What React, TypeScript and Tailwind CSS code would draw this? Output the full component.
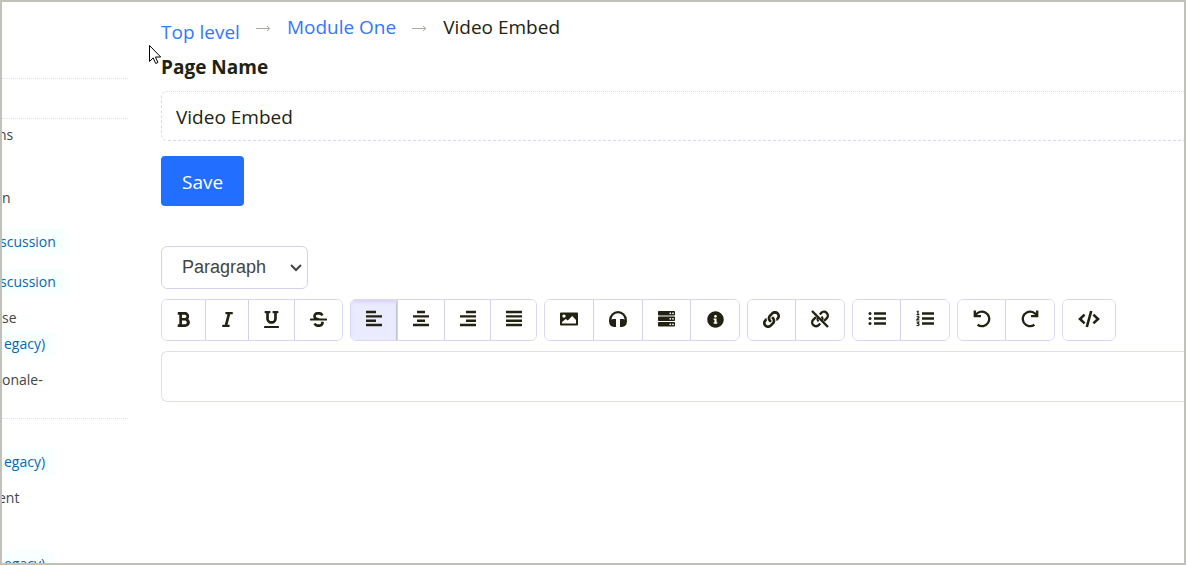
import { ReactNode, useState } from "react";
import { FaBold, FaInfoCircle, FaItalic, FaLink, FaStrikethrough, FaUnderline } from "react-icons/fa";

interface Tool {
  name: string;
  width: string;
  icon: ReactNode;
}

interface SideItem {
  text: string;
  link?: boolean;
  space: string;
}

const Lines = ({ d }: { d: string }) => (
  <svg width="18" height="18" viewBox="0 0 18 18" fill="none" stroke="currentColor" strokeWidth="2.4">
    <path d={d} />
  </svg>
);

const ImageIcon = () => (
  <svg width="18" height="18" viewBox="0 0 18 18" fill="currentColor" fillRule="evenodd">
    <path d="M1 2.5h16a1 1 0 0 1 1 1v11a1 1 0 0 1-1 1H1a1 1 0 0 1-1-1v-11a1 1 0 0 1 1-1ZM4 4.4a1.7 1.7 0 1 0 0 3.4 1.7 1.7 0 0 0 0-3.4ZM2 13.5h14V10l-3.8-4-4.4 4.4L5.8 9 2 12Z" />
  </svg>
);

const HeadphonesIcon = () => (
  <svg width="18" height="18" viewBox="0 0 18 18">
    <path d="M1.2 12v-2a7.8 7.8 0 0 1 15.6 0v2" fill="none" stroke="currentColor" strokeWidth="2.2" />
    <path
      d="M7 9v8H5.2C2 17 .2 14.8.2 12.6S2 9 4.6 9ZM11 9v8h1.8c3.2 0 5-2.2 5-4.4S16 9 13.4 9Z"
      fill="currentColor"
    />
  </svg>
);

const ServerIcon = () => (
  <svg width="18" height="18" viewBox="0 0 18 18">
    {[1, 6.5, 12].map((y) => (
      <g key={y}>
        <rect x="0" y={y} width="17" height="4.6" rx="0.8" fill="currentColor" />
        <circle cx="12.3" cy={y + 2.3} r="0.9" fill="white" />
        <circle cx="15" cy={y + 2.3} r="0.9" fill="white" />
      </g>
    ))}
  </svg>
);

const UnlinkIcon = () => (
  <svg width="18" height="18" viewBox="0 0 18 18" fill="none" stroke="currentColor" strokeWidth="2.4">
    <path d="M1 1l16 16" />
    <path d="M8.8 4.5l1.4-1.5a3.8 3.8 0 0 1 5.6 5.2L13 11M9.2 13.5l-1.4 1.5a3.8 3.8 0 0 1-5.6-5.2L5 7" />
    <path d="M10.5 6.5a3.5 3.5 0 0 1 1 3.5M7.5 11.5a3.5 3.5 0 0 1-1-3.5" strokeWidth="2" />
  </svg>
);

const ListIcon = ({ ordered = false }: { ordered?: boolean }) => (
  <svg width="18" height="18" viewBox="0 0 18 18" fill="none" stroke="currentColor">
    <path d="M6 3.5h12M6 8.5h12M6 13.5h12" strokeWidth="2.4" />
    {ordered ? (
      <path
        d="M.8 1.9l1.2-.6v3.4M.6 4.7h2.8M.6 7q2.4-1 2.4.4L.8 9.8h2.6M.6 12.1h2.2L1.8 13.5q1.6 0 1.2 1.4-.8 1-2.4.4"
        strokeWidth="1.2"
      />
    ) : (
      <g fill="currentColor" stroke="none">
        <circle cx="2" cy="3.5" r="1.5" />
        <circle cx="2" cy="8.5" r="1.5" />
        <circle cx="2" cy="13.5" r="1.5" />
      </g>
    )}
  </svg>
);

const UndoIcon = ({ flip = false }: { flip?: boolean }) => (
  <svg
    width="18"
    height="18"
    viewBox="0 0 18 18"
    fill="none"
    stroke="currentColor"
    strokeWidth="2.3"
    className={flip ? "-scale-x-100" : ""}
  >
    <path d="M1.8 .5V6.2H8" />
    <path d="M2.2 6A7.3 7.3 0 1 1 4.6 14.8" />
  </svg>
);

const CodeIcon = () => (
  <svg width="22" height="18" viewBox="0 0 22 18" fill="none" stroke="currentColor" strokeWidth="2.6">
    <path d="M6.6 4.6 2 9l4.6 4.4M15.4 4.6 20 9l-4.6 4.4M13.2 1 8.8 17" />
  </svg>
);

const toolGroups: Tool[][] = [
  [
    { name: "Bold", width: "w-11", icon: <FaBold /> },
    { name: "Italic", width: "w-[43px]", icon: <FaItalic /> },
    { name: "Underline", width: "w-[46px]", icon: <FaUnderline /> },
    { name: "Strikethrough", width: "w-[47px]", icon: <FaStrikethrough /> },
  ],
  [
    { name: "Align left", width: "w-[47px]", icon: <Lines d="M1 2h10M1 6.4h16M1 10.7h10M1 15h16" /> },
    { name: "Align center", width: "w-[47px]", icon: <Lines d="M5 2h8M1 6.4h16M5 10.7h8M1 15h16" /> },
    { name: "Align right", width: "w-[46px]", icon: <Lines d="M7 2h10M1 6.4h16M7 10.7h10M1 15h16" /> },
    { name: "Justify", width: "w-[45px]", icon: <Lines d="M1 2h16M1 6.4h16M1 10.7h16M1 15h16" /> },
  ],
  [
    { name: "Image", width: "w-[49px]", icon: <ImageIcon /> },
    { name: "Audio", width: "w-[49px]", icon: <HeadphonesIcon /> },
    { name: "Files", width: "w-12", icon: <ServerIcon /> },
    { name: "Info", width: "w-12", icon: <FaInfoCircle /> },
  ],
  [
    { name: "Link", width: "w-12", icon: <FaLink /> },
    { name: "Unlink", width: "w-12", icon: <UnlinkIcon /> },
  ],
  [
    { name: "Bullet list", width: "w-12", icon: <ListIcon /> },
    { name: "Numbered list", width: "w-12", icon: <ListIcon ordered /> },
  ],
  [
    { name: "Undo", width: "w-12", icon: <UndoIcon /> },
    { name: "Redo", width: "w-12", icon: <UndoIcon flip /> },
  ],
  [{ name: "Source code", width: "w-[52px]", icon: <CodeIcon /> }],
];

const upperItems: SideItem[] = [
  { text: "ns", space: "mt-[3px] -ml-1" },
  { text: "n", space: "mt-[37px]" },
  { text: "scussion", link: true, space: "mt-4.5 -ml-0.5" },
  { text: "scussion", link: true, space: "mt-3.5 -ml-0.5" },
  { text: "se", space: "mt-2.5" },
  { text: "egacy)", link: true, space: "ml-0.5" },
  { text: "onale-", space: "mt-2.5" },
];

const lowerItems: SideItem[] = [
  { text: "egacy)", link: true, space: "mt-7.5 ml-0.5" },
  { text: "ent", space: "mt-2.5 -ml-1" },
  { text: "egacy)", link: true, space: "mt-10 ml-0.5" },
];

function SideList({ items }: { items: SideItem[] }) {
  return (
    <ul>
      {items.map((item, i) => (
        <li key={i} className={`h-[26px] ${item.space}`}>
          {item.link ? (
            <a href="#" className="inline-block bg-[#f8ffff] pr-2.5 text-[#0b66b0]">
              {item.text}
            </a>
          ) : (
            item.text
          )}
        </li>
      ))}
    </ul>
  );
}

const Arrow = () => (
  <svg width="15" height="9" viewBox="0 0 15 9" className="mx-4 mt-3 text-[#aaa99a]" fill="none" stroke="currentColor">
    <path d="M0 4.5h13.5M11 2l2.8 2.5L11 7" />
  </svg>
);

export default function App() {
  const [pageName, setPageName] = useState("Video Embed");
  const [align, setAlign] = useState("Align left");

  return (
    <div className="relative flex h-screen overflow-hidden border-2 border-[#c1c1b9] bg-white font-['Open_Sans','Noto_Sans',sans-serif] text-[#222211]">
      {/* Course navigation */}
      <aside className="w-[126px] shrink-0 overflow-hidden text-sm leading-[26px] text-[#444]">
        <div className="h-[77px] border-b border-dotted border-[#ddddff]" />
        <div className="h-10 border-b border-dotted border-[#ddddff]" />
        <SideList items={upperItems} />
        <hr className="mt-[25px] border-t border-dotted border-[#ddddff]" />
        <SideList items={lowerItems} />
      </aside>

      <main className="min-w-0 flex-1 pl-[33px]">
        <nav aria-label="Breadcrumb" className="flex h-[50px] items-start pt-2.5 text-[19px] leading-[30px]">
          <a href="#" className="mt-[5px] text-[#3377ff]">
            Top level
          </a>
          <Arrow />
          <a href="#" className="text-[#3377ff]">
            Module One
          </a>
          <Arrow />
          <span>Video Embed</span>
        </nav>

        <label htmlFor="page-name" className="block text-[19px] leading-[30px] font-bold">
          Page Name
        </label>
        <input
          id="page-name"
          value={pageName}
          onChange={(e) => setPageName(e.target.value)}
          className="mt-[9px] block h-[50px] w-full rounded-l-md border border-r-0 border-[#d8d7fa] px-3.5 pt-0.5 text-[19px] [border-style:dotted_none_dashed_dashed]"
        />
        <button className="mt-[15px] block h-[50px] rounded bg-[#226eff] px-[21px] pt-0.5 text-[19px] font-medium text-white">
          Save
        </button>

        {/* Editor */}
        <div className="relative mt-10 w-[147px]">
          <select
            aria-label="Block style"
            className="block h-[43px] w-full appearance-none rounded-md border border-[#d4d3ee] bg-white pb-0.5 pl-5 font-['Liberation_Sans',sans-serif] text-lg text-[#444]"
          >
            <option>Paragraph</option>
          </select>
          <svg
            width="12"
            height="8"
            viewBox="0 0 12 8"
            fill="none"
            stroke="#444"
            strokeWidth="2"
            className="pointer-events-none absolute top-[18px] right-1.5"
          >
            <path d="M1 1l5 5 5-5" />
          </svg>
        </div>

        <div role="toolbar" className="mt-2.5 flex gap-[7px]">
          {toolGroups.map((group) => (
            <div
              key={group[0].name}
              className="flex h-[42px] shrink-0 divide-x divide-[#d4d3ee] overflow-hidden rounded-md border border-[#d8d7f6]"
            >
              {group.map((tool) => (
                <button
                  key={tool.name}
                  aria-label={tool.name}
                  onClick={() => tool.name.startsWith("Align") && setAlign(tool.name)}
                  className={`flex items-center justify-center pb-0.5 text-[17px] ${tool.width} ${
                    align === tool.name ? "bg-[#ebebff] shadow-[inset_0_3px_3px_#d9d9f7,inset_-1px_0_#b4b4c4]" : "bg-white"
                  }`}
                >
                  {tool.icon}
                </button>
              ))}
            </div>
          ))}
        </div>

        <textarea
          aria-label="Page content"
          className="mt-2.5 block h-[51px] w-full resize-none rounded-l-md border border-r-0 border-[#ddddff] px-3.5 py-2.5"
        />
      </main>

      {/* Mouse pointer */}
      <svg width="13" height="20" viewBox="0 0 13 20" className="absolute top-[43px] left-[147px]">
        <path d="M.5.5v16l3.7-3.6 2.5 5.6 2.2-1-2.4-5.5h5.2Z" fill="white" stroke="black" />
      </svg>
    </div>
  );
}
